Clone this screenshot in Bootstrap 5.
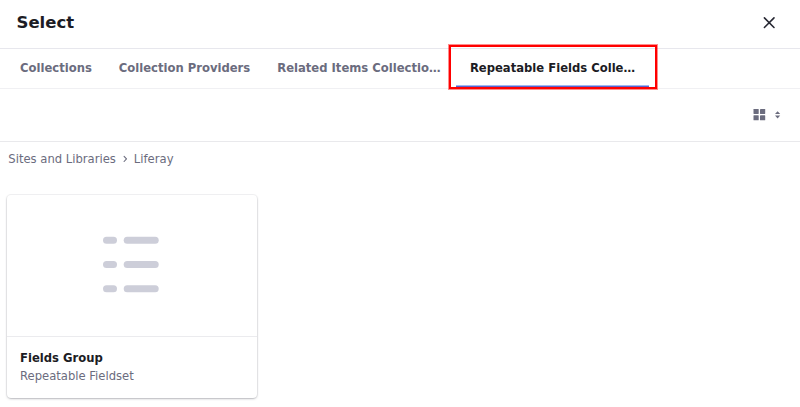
<!DOCTYPE html>
<html lang="en">
<head>
<meta charset="utf-8">
<meta name="viewport" content="width=device-width, initial-scale=1">
<title>Select</title>
<link href="https://cdn.jsdelivr.net/npm/bootstrap@5.3.0/dist/css/bootstrap.min.css" rel="stylesheet">
<style>
body{font-family:"DejaVu Sans",sans-serif;font-size:11.6px;line-height:17.5px;color:#6b6c7e;background:#fff;height:407px;overflow:hidden}
.dialog-head{height:49px;border-bottom:1px solid #e7e7ed;padding:0 23px 3px 16.5px}
.dialog-title{font-size:16.5px;font-weight:700;color:#1c1c24}
.tabs-bar{height:40px;border-bottom:1px solid #f0f0f3;padding-left:6px}
.tabs-bar .nav-link{height:39px;padding:11px 0 0;margin-left:14px;margin-right:13px;color:#6b6c7e;font-weight:700;white-space:nowrap}
.tabs-bar .nav-link.active{color:#1c1c24;margin-right:14px}
.tab-current{position:relative;margin-left:2.4px}
.tab-current::before{content:"";position:absolute;left:0;right:0;bottom:1px;height:2px;background:linear-gradient(#9db8f2 50%,#5a62cc 50%)}
.tab-current::after{content:"";position:absolute;left:-7px;right:-8px;top:-4px;height:44px;border:2px solid #f00;box-shadow:0 0 0 1px rgba(255,0,0,.45)}
.tools{height:53px;border-bottom:1px solid #e9e9ec;padding-right:19px}
.crumbs{height:53px;padding:9px 8.3px 0}
.item-card{width:250px;height:203px;margin-left:6.7px;border:0;border-radius:4px;box-shadow:0 0 0 1px rgba(39,40,51,.05),0 1px 3px -1px rgba(39,40,51,.6)}
.item-art{height:142px;border-bottom:1px solid #ebebee}
.item-name{color:#1c1c24;font-weight:700}
.item-info{padding:13px 13.3px 0}
</style>
</head>
<body>
<header class="dialog-head d-flex align-items-center justify-content-between">
  <h1 class="dialog-title m-0">Select</h1>
  <button class="btn p-0 border-0 d-flex" aria-label="Close"><svg width="16" height="16" viewBox="0 0 16 16" fill="none" stroke="#272833" stroke-width="1.6" stroke-linecap="round"><path d="M3.4 2.9l9.6 9.6M13 2.9L3.4 12.5"/></svg></button>
</header>
<ul class="nav tabs-bar flex-nowrap">
  <li class="nav-item"><a class="nav-link" href="#">Collections</a></li>
  <li class="nav-item"><a class="nav-link" href="#">Collection Providers</a></li>
  <li class="nav-item"><a class="nav-link" href="#">Related Items Collectio…</a></li>
  <li class="nav-item tab-current"><a class="nav-link active" href="#">Repeatable Fields Colle…</a></li>
</ul>
<div class="tools d-flex align-items-center justify-content-end">
  <svg width="28" height="14" viewBox="0 0 28 14" fill="#6b6c7e"><rect x="0.5" y="1" width="5.2" height="5" rx=".4"/><rect x="7" y="1" width="5.2" height="5" rx=".4"/><rect x="0.5" y="7.3" width="5.2" height="5" rx=".4"/><rect x="7" y="7.3" width="5.2" height="5" rx=".4"/><path d="M22 6L24.6 3.2 27.2 6zM22 7.6h5.2L24.6 10.4z"/></svg>
</div>
<nav class="crumbs d-flex" aria-label="Breadcrumb">
  <span>Sites and Libraries</span>
  <svg class="mx-1" width="10" height="18" viewBox="0 0 10 18" fill="none" stroke="#6b6c7e" stroke-width="1.1" stroke-linecap="round" stroke-linejoin="round"><path d="M4.1 5.3L6.5 7.9 4.1 10.5"/></svg>
  <span>Liferay</span>
</nav>
<main class="card item-card">
  <div class="item-art d-flex align-items-center justify-content-center">
    <svg width="57" height="60" viewBox="0 0 57 60" fill="#cdced9"><rect x="0" y=".7" width="14" height="7" rx="3.5"/><rect x="20.7" y=".7" width="35" height="7" rx="3.5"/><rect x="0" y="25" width="14" height="7" rx="3.5"/><rect x="20.7" y="25" width="35" height="7" rx="3.5"/><rect x="0" y="49.3" width="14" height="7" rx="3.5"/><rect x="20.7" y="49.3" width="35" height="7" rx="3.5"/></svg>
  </div>
  <div class="item-info">
    <div class="item-name">Fields Group</div>
    <div>Repeatable Fieldset</div>
  </div>
</main>
<script src="https://cdn.jsdelivr.net/npm/bootstrap@5.3.0/dist/js/bootstrap.bundle.min.js"></script>
</body>
</html>
